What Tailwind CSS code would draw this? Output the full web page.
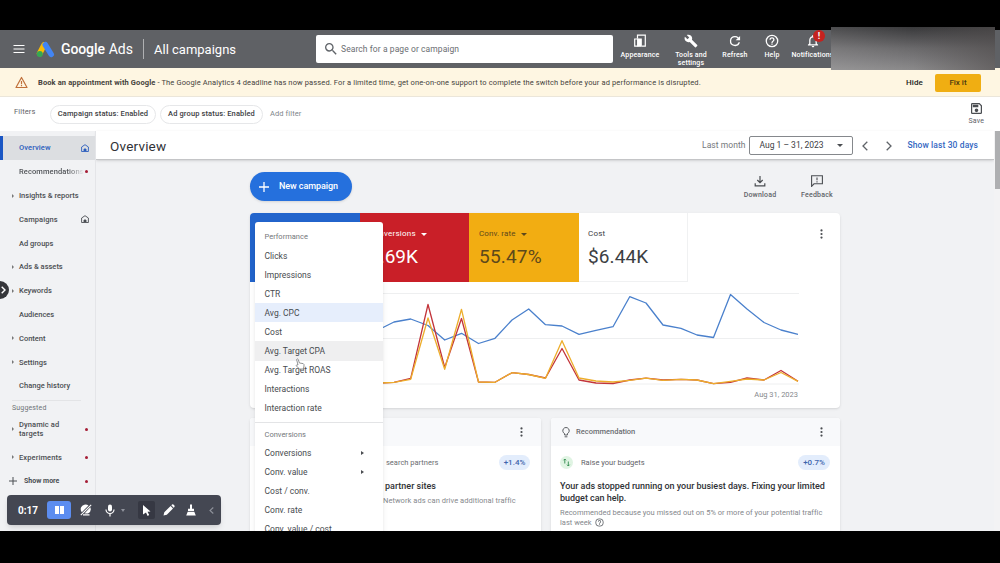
<!DOCTYPE html>
<html lang="en">
<head>
    <meta charset="UTF-8">
    <meta name="viewport" content="width=device-width, initial-scale=1.0">
    <title>Overview - Google Ads</title>
    <script src="https://cdn.jsdelivr.net/npm/@tailwindcss/browser@4"></script>
    <style>
        html, body { height: 100%; overflow: hidden; }
        body { font-family: Roboto, sans-serif; }
    </style>
</head>
<body class="bg-black text-[#3c4043]">
<div class="relative flex h-[531px] w-[1000px] flex-col overflow-hidden pt-[30px]">

    <!-- Top bar -->
    <header class="relative flex h-[38px] shrink-0 items-center bg-[#5f6165] text-white">
        <svg class="ml-[13px] h-3 w-3" viewBox="0 0 12 12" stroke="#fff" stroke-width="1.2"><path d="M0.5 2.5h11M0.5 6h11M0.5 9.5h11"/></svg>
        <svg class="ml-[11px] h-[17px] w-[19px]" viewBox="0 0 19 17">
            <path d="M8 4L3.6 12.6" stroke="#fbbc04" stroke-width="5.6" stroke-linecap="round"/>
            <path d="M9.3 3.8L15.2 13.4" stroke="#4285f4" stroke-width="5.6" stroke-linecap="round"/>
            <circle cx="3.8" cy="13" r="3" fill="#34a853"/>
        </svg>
        <div class="ml-[6px] flex w-[82px] gap-[4px] pt-px text-[14px] tracking-[-0.1px] whitespace-nowrap"><span class="font-medium">Google</span><span>Ads</span></div>
        <div class="h-5 w-px bg-white/50"></div>
        <div class="ml-[10px] w-[162px] pt-px text-[13px] whitespace-nowrap">All campaigns</div>
        <div class="flex h-7 w-[297px] items-center rounded-[2px] bg-white text-[#6b6e72]">
            <svg class="ml-[9px] h-3 w-3" viewBox="3 3 18 18" fill="#5f6368"><path d="M15.5 14h-.79l-.28-.27A6.471 6.471 0 0016 9.5 6.500 6.500 0 109.500 16c1.610 0 3.090-.59 4.230-1.570l.27.28v.79l5 4.990L20.490 19l-4.990-5zm-6 0C7.010 14 5 11.990 5 9.500S7.010 5 9.500 5 14 7.010 14 9.500 11.990 14 9.500 14z"/></svg>
            <span class="ml-[4px] pt-px text-[8.500px] tracking-[0.080px]">Search for a page or campaign</span>
        </div>
        <nav class="-ml-px flex h-full flex-1 items-start pt-[4px] text-center text-[7px] leading-[8px] font-medium tracking-[0.14px]">
            <div class="flex w-[56px] flex-col items-center gap-[3px]">
                <svg class="h-[14px] w-[14px]" viewBox="0 0 14 14" fill="none" stroke="#fff" stroke-width="1.2"><path d="M4.500 4.500V1.200h7.800v11H8.800"/><path d="M1.700 5h3v7.200h-3z"/><path d="M5 5h3.200v7.200H5z" fill="#fff"/></svg>
                <span>Appearance</span>
            </div>
            <div class="flex w-[46px] flex-col items-center gap-[3px]">
                <svg class="h-[14px] w-[14px]" viewBox="0 0 24 24" fill="#fff"><path d="M22.7 19l-9.1-9.1c.9-2.3.4-5-1.5-6.9-2-2-5-2.4-7.4-1.3L9 6 6 9 1.6 4.7C.4 7.1.9 10.1 2.9 12.1c1.9 1.9 4.6 2.4 6.9 1.5l9.1 9.1c.4.4 1 .4 1.4 0l2.3-2.3c.5-.4.5-1.1.1-1.4z"/></svg>
                <span>Tools and<br>settings</span>
            </div>
            <div class="flex w-[42px] flex-col items-center gap-[3px]">
                <svg class="h-[14px] w-[14px]" viewBox="1 1 22 22" fill="#fff"><path d="M17.65 6.35A7.958 7.958 0 0012 4a8 8 0 107.73 10h-2.08A5.99 5.99 0 0112 18a6 6 0 110-12c1.66 0 3.14.69 4.22 1.78L13 11h7V4l-2.35 2.35z"/></svg>
                <span>Refresh</span>
            </div>
            <div class="flex w-[32px] flex-col items-center gap-[3px]">
                <svg class="h-[14px] w-[14px]" viewBox="1 1 22 22" fill="#fff"><path d="M11 18h2v-2h-2v2zm1-16a10 10 0 100 20 10 10 0 000-20zm0 18a8 8 0 110-16 8 8 0 010 16zm0-14a4 4 0 00-4 4h2a2 2 0 114 0c0 2-3 1.75-3 5h2c0-2.25 3-2.5 3-5a4 4 0 00-4-4z"/></svg>
                <span>Help</span>
            </div>
            <div class="relative flex w-[49px] flex-col items-center gap-[3px]">
                <svg class="h-[14px] w-[14px]" viewBox="1 1 22 22" fill="#fff"><path d="M12 22c1.1 0 2-.9 2-2h-4c0 1.1.9 2 2 2zm6-6v-5c0-3.07-1.63-5.64-4.5-6.32V4a1.5 1.5 0 00-3 0v.68C7.64 5.36 6 7.92 6 11v5l-2 2v1h16v-1l-2-2zm-2 1H8v-6c0-2.48 1.51-4.5 4-4.5s4 2.02 4 4.5v6z"/></svg>
                <span>Notifications</span>
                <span class="absolute -top-[4px] left-[25px] h-3 w-3 rounded-full bg-[#c5221f] text-[9px] leading-3 font-bold">!</span>
            </div>
        </nav>
    </header>
    <div class="absolute top-[27px] left-[831px] h-[43px] w-[164px] bg-linear-to-b from-[#39393b] via-[#6b6a6c] to-[#8b8a8b]">
        <div class="h-full w-full bg-linear-to-r from-white/10 via-transparent to-[#504c4c]/60"></div>
    </div>

    <!-- Alert -->
    <div class="flex h-[29px] shrink-0 items-center border-b border-[#ebe6da] bg-[#fef6e2] pt-px text-[7.5px] text-[#45423c]">
        <svg class="ml-[15px] h-[13px] w-[13px]" viewBox="0 0 13 13" fill="none" stroke="#c0703a" stroke-width="1.2"><path d="M6.5 1.5L12 11.5H1z" stroke-linejoin="round"/><path d="M6.5 5v3.2M6.5 9.1v1.2"/></svg>
        <div class="ml-[10px] w-[868px] tracking-[0.12px] whitespace-nowrap"><span class="font-bold">Book an appointment with Google</span> - The Google Analytics 4 deadline has now passed. For a limited time, get one-on-one support to complete the switch before your ad performance is disrupted.</div>
        <span class="w-[29px] text-[8px] font-medium tracking-[0.1px] text-[#222]">Hide</span>
        <div class="flex h-[18px] w-[46px] items-center justify-center rounded-[2px] bg-[#f0ae12] text-[8px] font-medium text-[#4d3a10]">Fix it</div>
    </div>

    <!-- Filters -->
    <div class="flex h-[34px] shrink-0 items-center bg-white text-[7.5px]">
        <span class="ml-[14px] w-[36px] pb-1 tracking-[0.12px] text-[#5f6368]">Filters</span>
        <span class="flex h-[19px] w-[106px] items-center justify-center rounded-full border border-[#e6e7e9] font-medium tracking-[0.12px]">Campaign status: Enabled</span>
        <span class="ml-1 flex h-[19px] w-[103px] items-center justify-center rounded-full border border-[#e6e7e9] font-medium tracking-[0.12px]">Ad group status: Enabled</span>
        <span class="ml-[7px] tracking-[0.1px] text-[#80868b]">Add filter</span>
        <div class="mr-4 ml-auto flex flex-col items-center gap-[3px] text-[7px] leading-[9px] tracking-[0.15px] text-[#5f6368]">
            <svg class="h-[11px] w-[11px]" viewBox="3 3 18 18" fill="#4a4d51"><path d="M17 3H5a2 2 0 00-2 2v14c0 1.1.9 2 2 2h14c1.1 0 2-.9 2-2V7l-4-4zm2 16H5V5h11.17L19 7.83V19zm-7-7a3 3 0 100 6 3 3 0 000-6zM6 6h9v4H6z"/></svg>
            <span>Save</span>
        </div>
    </div>

    <div class="flex h-[400px] shrink-0 bg-[#f1f2f4]">
        <!-- Side navigation -->
        <aside class="relative w-24 shrink-0 border-r border-[#e4e5e8] pt-[5px] text-[7.5px] font-medium text-[#4b4e52]">
            <div class="flex h-6 items-center border-l-[3px] border-[#1a56c4] bg-[#dcdee1] pl-4 text-[#2b5dbd]">
                <span class="w-[62px] tracking-[0.1px]">Overview</span>
                <svg class="h-2 w-2" viewBox="0 0 8 8" fill="none" stroke="currentColor" stroke-width=".9"><path d="M.6 7.500V3L4 .7 7.400 3v4.500z"/><path d="M3 7V5h2v2" fill="currentColor"/></svg>
            </div>
            <div class="flex h-[23.8px] items-center pl-[19px]"><span class="w-[65px] overflow-hidden bg-linear-to-r from-[#4b4e52] from-75% to-transparent bg-clip-text tracking-[0.1px] whitespace-nowrap text-transparent">Recommendations</span><i class="ml-[1px] h-[3px] w-[3px] rounded-full bg-[#a51d35]"></i></div>
            <div class="flex h-[23.8px] items-center pl-3"><i class="mr-[5px] border-y-2 border-l-2 border-y-transparent border-l-[#777]"></i>Insights &amp; reports</div>
            <div class="flex h-[23.8px] items-center pl-[19px]">
                <span class="w-[62px] tracking-[0.1px]">Campaigns</span>
                <svg class="h-2 w-2" viewBox="0 0 8 8" fill="none" stroke="currentColor" stroke-width=".9"><path d="M.6 7.500V3L4 .7 7.400 3v4.500z"/><path d="M3 7V5h2v2" fill="currentColor"/></svg>
            </div>
            <div class="flex h-[23.8px] items-center pl-[19px]">Ad groups</div>
            <div class="flex h-[23.8px] items-center pl-3"><i class="mr-[5px] border-y-2 border-l-2 border-y-transparent border-l-[#777]"></i>Ads &amp; assets</div>
            <div class="flex h-[23.8px] items-center pl-3"><i class="mr-[5px] border-y-2 border-l-2 border-y-transparent border-l-[#777]"></i>Keywords</div>
            <div class="flex h-[23.8px] items-center pl-[19px]">Audiences</div>
            <div class="flex h-[23.8px] items-center pl-3"><i class="mr-[5px] border-y-2 border-l-2 border-y-transparent border-l-[#777]"></i>Content</div>
            <div class="flex h-[23.8px] items-center pl-3"><i class="mr-[5px] border-y-2 border-l-2 border-y-transparent border-l-[#777]"></i>Settings</div>
            <div class="flex h-[23.8px] items-center pl-[19px] tracking-[0.06px]">Change history</div>
            <div class="mt-[2px] mr-[14px] ml-3 h-px bg-[#e3e4e6]"></div>
            <div class="h-[18px] pt-[1px] pl-3 text-[7px] leading-3 font-normal tracking-[0.15px] text-[#6f7276]">Suggested</div>
            <div class="flex h-5 items-center pt-px pl-3 leading-[9.5px]"><i class="mr-[5px] border-y-2 border-l-2 border-y-transparent border-l-[#777]"></i><span class="w-[66px] tracking-[0.1px]">Dynamic ad<br>targets</span><i class="h-[3px] w-[3px] rounded-full bg-[#a51d35]"></i></div>
            <div class="mt-[7px] flex h-[23px] items-center pl-3"><i class="mr-[5px] border-y-2 border-l-2 border-y-transparent border-l-[#777]"></i><span class="w-[66px] tracking-[0.1px]">Experiments</span><i class="h-[3px] w-[3px] rounded-full bg-[#a51d35]"></i></div>
            <div class="mt-px flex h-[23px] items-center pl-[9px] text-[7px] font-bold"><svg class="mr-[7px] h-2 w-2" viewBox="0 0 8 8" stroke="#4b4e52"><path d="M0 4h8M4 0v8"/></svg><span class="w-[61px]">Show more</span><i class="h-[3px] w-[3px] rounded-full bg-[#a51d35]"></i></div>
            <div class="absolute top-[150px] -left-[9px] flex h-[18px] w-[18px] items-center justify-end rounded-full bg-[#35363a] pr-[3px]">
                <svg class="h-2 w-[5px]" viewBox="0 0 5 8" fill="none" stroke="#fff" stroke-width="1.4"><path d="M.7.7L4 4 .7 7.3"/></svg>
            </div>
        </aside>

        <main class="w-[898px] shrink-0">
            <!-- Page title and date range -->
            <div class="flex h-[29px] items-center border-b border-[#c4c5c7] bg-white pt-px pr-4 pl-[14px] shadow-sm">
                <h1 class="pt-px text-[13.5px] tracking-[0.2px] text-[#303236]">Overview</h1>
                <span class="mr-[4px] ml-auto text-[8.5px] tracking-[0.05px] text-[#74777b]">Last month</span>
                <div class="flex h-[19px] w-[104px] items-center justify-between rounded-[2px] border border-[#85888c] pr-[9px] pl-[9px] text-[8.5px]">Aug 1 – 31, 2023<i class="border-x-[3px] border-t-[3px] border-x-transparent border-t-[#4a4d51]"></i></div>
                <svg class="ml-[9px] h-[10px] w-[6px]" viewBox="0 0 6 10" fill="none" stroke="#5f6368" stroke-width="1.3"><path d="M5.3.7L1 5l4.3 4.3"/></svg>
                <svg class="mr-[15px] ml-[18px] h-[10px] w-[6px]" viewBox="0 0 6 10" fill="none" stroke="#5f6368" stroke-width="1.3"><path d="M.7.7L5 5 .7 9.3"/></svg>
                <span class="text-[8.5px] font-medium tracking-[0.1px] text-[#3467c2]">Show last 30 days</span>
            </div>

            <div class="w-[744px] pl-[154px]">
                <div class="flex h-[53px] items-start pt-3">
                    <button class="flex h-[29px] w-[102px] items-center rounded-full bg-[#2570dd] pt-px pl-[9px] text-[9px] font-medium text-white shadow">
                        <svg class="mr-[10px] h-[10px] w-[10px]" viewBox="0 0 10 10" stroke="#fff" stroke-width="1.3"><path d="M0 5h10M5 0v10"/></svg><span class="tracking-[-0.08px]">New campaign</span>
                    </button>
                    <div class="ml-auto flex w-[54px] flex-col items-center gap-[3px] pt-[3px] text-[7px] leading-[10px] font-medium tracking-[0.2px] text-[#5f6368]">
                        <svg class="h-3 w-3" viewBox="0 0 12 12" fill="none" stroke="#4a4d51" stroke-width="1.2"><path d="M6 1v6.600M3.300 5L6 7.700 8.700 5M1.200 8.300v2.500h9.600V8.300"/></svg>Download
                    </div>
                    <div class="mr-[-7px] flex w-[60px] flex-col items-center gap-[3px] pt-[3px] text-[7px] leading-[10px] font-medium tracking-[0.2px] text-[#5f6368]">
                        <svg class="h-3 w-3" viewBox="0 0 12 12" fill="none" stroke="#4a4d51" stroke-width="1.1"><path d="M.6 11.4V.8h10.8v8H3z"/><path d="M6 2.5v2.8M6 6.2v1.2"/></svg>Feedback
                    </div>
                </div>

                <!-- Scorecards and chart -->
                <section class="h-[195px] w-[590px] overflow-hidden rounded-[4px] bg-white shadow">
                    <div class="flex h-[69px] text-[8px]">
                        <div class="w-[110px] bg-[#2264cc]"></div>
                        <div class="w-[109px] bg-[#c91f28] pt-[15px] pl-[9px] text-white">
                            <div class="flex items-center gap-[5px] text-[8px] leading-3 tracking-[0.25px]">Conversions<i class="border-x-[3px] border-t-[3px] border-x-transparent border-t-white"></i></div>
                            <div class="pt-[7px] text-[19px] leading-5">3.69K</div>
                        </div>
                        <div class="w-[110px] bg-[#f2ad12] pt-[15px] pl-[10px] text-[#5d481b]">
                            <div class="flex items-center gap-[5px] text-[8px] leading-3 tracking-[0.1px]">Conv. rate<i class="border-x-[3px] border-t-[3px] border-x-transparent border-t-[#5d481b]"></i></div>
                            <div class="pt-[7px] text-[19px] leading-5 tracking-[0.2px]">55.47%</div>
                        </div>
                        <div class="w-[109px] border-r border-b border-[#f0f1f2] pt-[15px] pl-[9px]">
                            <div class="text-[8px] leading-3 tracking-[0.2px]">Cost</div>
                            <div class="pt-[7px] text-[19px] leading-5 tracking-[0.1px]">$6.44K</div>
                        </div>
                        <svg class="mt-[16px] ml-[131px] h-[10px] w-[5px]" viewBox="0 0 5 10" fill="#4a4d51"><circle cx="2.5" cy="1.4" r="1.1"/><circle cx="2.5" cy="5" r="1.1"/><circle cx="2.5" cy="8.6" r="1.1"/></svg>
                    </div>
                    <svg class="block h-[126px] w-[590px]" viewBox="250 282 590 126" fill="none" stroke-width="1.3" stroke-linejoin="round">
                        <path d="M291 293.5h508M291 338.5h508M291 384h508" stroke="#eeeff0" stroke-width="1"/>
                        <polyline stroke="#4a80cc" points="380,329 394,322 410.7,319 428,325.5 444.7,340 461.5,333.3 478.5,343.5 495,338.3 512,320 528.7,309 545.5,324.7 562,326 579,334.3 596,330.3 613,326.7 629.7,296.7 646,303 663,325 681,328.3 697,335 713.5,337.5 730.5,294.5 747,309 764,322.5 781,330 798,334.3"/>
                        <polyline stroke="#c2343a" points="380,383 394,382.3 410.7,378.3 428,304.5 444.7,367.5 461.5,318.5 478.5,382 495,382.3 512,372.7 528.7,374.5 545.5,378 562,348.5 579,380 596,383 613,383.5 629.7,380 646,378.2 663,380 681,379.3 697,380 713.5,383.7 730.5,382.3 747,378 764,380 781,370.5 798,381.3"/>
                        <polyline stroke="#edae2c" points="380,383 394,382.3 410.7,379.3 428,318 444.7,369.3 461.5,309.3 478.5,382 495,382.3 512,372.7 528.7,374.5 545.5,378.3 562,340.7 579,378 596,381 613,382 629.7,380.3 646,378.2 663,380.3 681,379.3 697,380 713.5,383.7 730.5,381.3 747,379 764,380 781,372.5 798,381.3"/>
                        <text x="798" y="396.5" text-anchor="end" font-size="7.5" fill="#85888c" stroke="none">Aug 31, 2023</text>
                    </svg>
                </section>

                <!-- Recommendation cards -->
                <div class="mt-[10px] flex w-[590px] gap-[10px]">
                    <section class="h-[140px] w-[291px] rounded-t-[3px] bg-white shadow">
                        <div class="flex h-7 items-center justify-end rounded-t-[3px] bg-[#f8f9fb] pr-[17px]">
                            <svg class="h-[10px] w-[5px]" viewBox="0 0 5 10" fill="#4a4d51"><circle cx="2.5" cy="1.4" r="1.1"/><circle cx="2.5" cy="5" r="1.1"/><circle cx="2.5" cy="8.6" r="1.1"/></svg>
                        </div>
                        <div class="flex h-[33px] items-center justify-between pr-[11px] pl-[136px] text-[7.5px] text-[#6a6d71]">search partners<span class="flex h-[15px] w-[31px] items-center justify-center rounded-full bg-[#e3edfc] text-[8px] font-medium text-[#3f65ad]">+1.4%</span></div>
                        <div class="pt-px pl-[135px] text-[9px] leading-3 font-medium text-[#303236]">partner sites</div>
                        <div class="pt-[4px] pl-[133px] text-[7.5px] leading-[10px] tracking-[0.05px] whitespace-nowrap text-[#85888c]">Network ads can drive additional traffic</div>
                    </section>
                    <section class="h-[140px] w-[289px] rounded-t-[3px] bg-white shadow">
                        <div class="flex h-7 items-center rounded-t-[3px] bg-[#f8f9fb] pr-4 pl-[11px] text-[7.5px] font-medium text-[#6a6d71]">
                            <svg class="mr-[6px] h-[11px] w-2" viewBox="0 0 8 11" fill="none" stroke="#4a4d51" stroke-width=".9"><path d="M2.600 8V6.600A3.200 3.200 0 1 1 5.400 6.600V8zM2.600 9.800h2.800"/></svg>Recommendation
                            <svg class="ml-auto h-[10px] w-[5px]" viewBox="0 0 5 10" fill="#4a4d51"><circle cx="2.5" cy="1.4" r="1.1"/><circle cx="2.5" cy="5" r="1.1"/><circle cx="2.5" cy="8.6" r="1.1"/></svg>
                        </div>
                        <div class="flex h-[33px] items-center pr-[10px] pl-[9px] text-[7.5px] text-[#5f6368]">
                            <svg class="mr-2 h-[13px] w-[13px]" viewBox="0 0 13 13" fill="none" stroke="#2f8a4c" stroke-width=".9"><circle cx="6.5" cy="6.5" r="6.5" fill="#e0f4e3" stroke="none"/><path d="M4.8 7.5V3M3.5 4.3L4.8 3l1.3 1.3M8.3 5.5V10M7 8.7L8.3 10l1.3-1.3"/></svg>Raise your budgets
                            <span class="ml-auto flex h-[15px] w-[32px] items-center justify-center rounded-full bg-[#e3edfc] text-[8px] font-medium text-[#3f65ad]">+0.7%</span>
                        </div>
                        <div class="pt-px pl-[9px] text-[9px] leading-3 font-medium tracking-[-0.03px] whitespace-nowrap text-[#303236]">Your ads stopped running on your busiest days. Fixing your limited<br>budget can help.</div>
                        <div class="pt-[4px] pl-[9px] text-[7.5px] leading-[10px] tracking-[0.02px] whitespace-nowrap text-[#85888c]">Recommended because you missed out on 5% or more of your potential traffic<br>last week <svg class="ml-[1px] inline h-[9px] w-[9px] align-[-2px]" viewBox="1 1 22 22" fill="#5f6368"><path d="M11 18h2v-2h-2v2zm1-16a10 10 0 100 20 10 10 0 000-20zm0 18a8 8 0 110-16 8 8 0 010 16zm0-14a4 4 0 00-4 4h2a2 2 0 114 0c0 2-3 1.75-3 5h2c0-2.25 3-2.5 3-5a4 4 0 00-4-4z"/></svg></div>
                    </section>
                </div>
            </div>
        </main>

        <div class="w-[6px] bg-[#f3f3f4] pl-[1px]"><div class="h-[58px] bg-[#aeafb1]"></div></div>
    </div>

    <!-- Metric menu -->
    <div class="absolute top-[222px] left-[255px] h-[330px] w-[128px] rounded-[3px] bg-white pt-[5px] text-[8.5px] text-[#484b4f] shadow-md">
        <div class="flex h-[19px] items-center pl-[9.5px] text-[7.5px] text-[#74777b]">Performance</div>
        <div class="flex h-[19.1px] items-center pt-px pl-[9.5px]">Clicks</div>
        <div class="flex h-[19.1px] items-center pt-px pl-[9.5px]">Impressions</div>
        <div class="flex h-[19.1px] items-center pt-px pl-[9.5px]">CTR</div>
        <div class="flex h-[19.1px] items-center bg-[#e6eefc] pt-px pl-[9.5px]">Avg. CPC</div>
        <div class="flex h-[19.1px] items-center pl-[9.5px]">Cost</div>
        <div class="flex h-[19.1px] items-center bg-[#efeff0] pl-[9.5px]">Avg. Target CPA</div>
        <div class="flex h-[19.1px] items-center pl-[9.5px]">Avg. Target ROAS</div>
        <div class="flex h-[19.1px] items-center pl-[9.5px]">Interactions</div>
        <div class="flex h-[19.1px] items-center pl-[9.5px]">Interaction rate</div>
        <div class="mt-[4px] border-t border-[#e3e4e6]"></div>
        <div class="mt-[3px] flex h-[18px] items-center pl-[9.5px] text-[7.5px] text-[#74777b]">Conversions</div>
        <div class="flex h-[19.1px] items-center justify-between pr-[19px] pl-[9.5px]">Conversions<i class="border-y-[2.5px] border-l-[3px] border-y-transparent border-l-[#4a4d51]"></i></div>
        <div class="flex h-[19.1px] items-center justify-between pr-[19px] pl-[9.5px]">Conv. value<i class="border-y-[2.5px] border-l-[3px] border-y-transparent border-l-[#4a4d51]"></i></div>
        <div class="flex h-[19.1px] items-center pl-[9.5px]">Cost / conv.</div>
        <div class="flex h-[19.1px] items-center pl-[9.5px]">Conv. rate</div>
        <div class="flex h-[19.1px] items-center pl-[9.5px]">Conv. value / cost</div>
    </div>
    <!-- Hand pointer -->
    <svg class="absolute top-[358px] left-[295px] h-3 w-[10px]" viewBox="0 0 10 12" fill="#fff" stroke="#66686c" stroke-width=".7" stroke-linejoin="round"><path d="M3 7L1.6 1.5Q2.4.3 3.2 1.4L4.4 5l3.8.6Q9.3 6 9 8l-.7 3H4.6L1 7.6Q1.5 6.4 3 7z"/></svg>

    <!-- Recorder controls -->
    <div class="absolute top-[495px] left-[7px] flex h-[30px] w-[214px] items-center rounded-[4px] bg-[#444752] text-white shadow-md">
        <span class="ml-[11px] w-[29px] text-[10px] font-bold">0:17</span>
        <span class="flex h-[18px] w-6 items-center justify-center gap-[1px] rounded-[3px] bg-[#5c8df0]"><i class="h-2 w-[4px] bg-white"></i><i class="h-2 w-[4px] bg-white"></i></span>
        <svg class="ml-[9px] h-3 w-3" viewBox="0 0 12 12" fill="#fff"><path d="M1 3.500A5 5 0 0 1 8.500 1.500L1.800 8.200A5 5 0 0 1 1 3.500zM10.300 3.200Q12 7.500 8 9.500H4.500zM3 10.300h6.500v1.200H3z"/><path d="M.8 11.200L11.200.8" stroke="#fff" stroke-width="1.100"/></svg>
        <svg class="ml-[13px] h-[13px] w-[10px]" viewBox="0 0 10 13" fill="#fff"><rect x="3" y="0.5" width="4" height="7" rx="2"/><path d="M1 5.5a4 4 0 008 0M5 9.5v3" fill="none" stroke="#fff" stroke-width="1.2"/></svg>
        <i class="ml-[6px] border-x-2 border-t-[3px] border-x-transparent border-t-[#8f929b]"></i>
        <span class="ml-[13px] flex h-[18px] w-[17px] items-center justify-center rounded-[2px] bg-[#363843]">
            <svg class="h-[11px] w-[9px]" viewBox="0 0 9 11" fill="#fff"><path d="M1 0l7.5 6.5-3 .3 1.7 3.3-1.6.8L4 7.5 1 9.5z"/></svg>
        </span>
        <svg class="ml-[8px] h-3 w-3" viewBox="0 0 12 12" fill="#fff"><path d="M.5 11.5l.8-3.3L7.6 2l2.4 2.4-6.2 6.3zM8.3 1.3l.8-.8q.7-.4 1.3.1l1 1q.5.7 0 1.3l-.7.8z"/></svg>
        <svg class="ml-[11px] h-3 w-[10px]" viewBox="0 0 10 12" fill="#fff"><path d="M4 .5h2v4.2h2V7H2V4.7h2zM1.7 7.8h6.6l1.5 3.7H.2z"/></svg>
        <svg class="ml-[13px] h-[7px] w-[5px]" viewBox="0 0 5 7" fill="none" stroke="#8f929b" stroke-width="1.1"><path d="M4.3.5L1 3.5l3.3 3"/></svg>
    </div>
</div>
</body>
</html>
